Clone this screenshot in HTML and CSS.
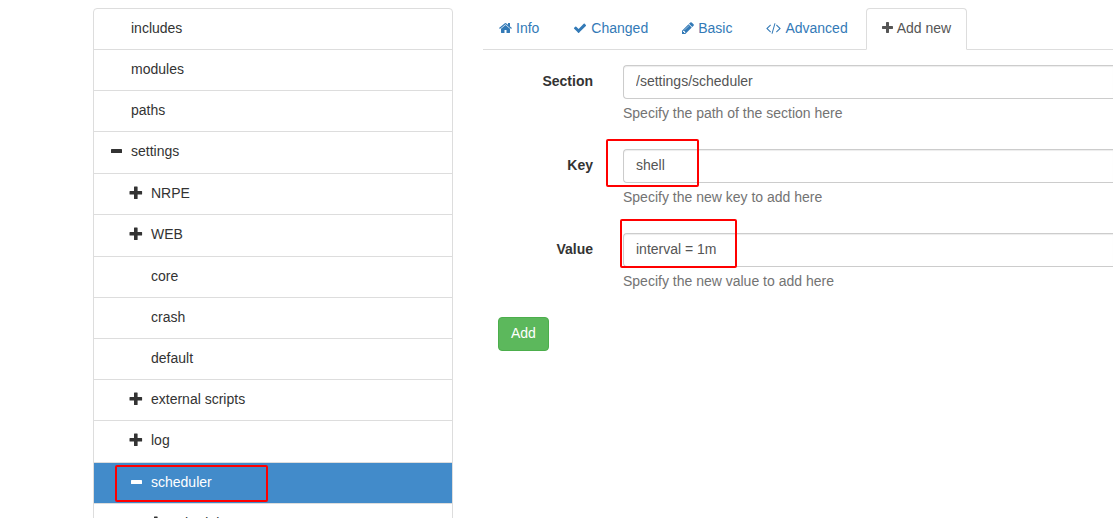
FILE: index.html
```html
<!DOCTYPE html>
<html lang="en">
  <head>
    <meta charset="UTF-8" />
    <meta name="viewport" content="width=device-width, initial-scale=1.0" />
    <title>Settings</title>
    <link rel="stylesheet" href="styles.css">
  </head>
  <body>
    <svg class="symbols" aria-hidden="true">
      <symbol id="tree-plus" viewBox="0 0 14 14">
        <path d="M5.5 0.5h2.6q.5 0 .5.5v4h4q.5 0 .5.5v2.6q0 .5-.5.5h-4v4q0 .5-.5.5h-2.6q-.5 0-.5-.5v-4h-4q-.5 0-.5-.5v-2.600q0-.5.5-.5h4v-4q0-.5.5-.5z" />
      </symbol>
      <symbol id="tree-minus" viewBox="0 0 14 14">
        <rect x="2" y="5" width="11" height="4" rx="0.6" />
      </symbol>
    </svg>

    <div class="container">
      <ul class="tree">
        <li class="node"><span class="icon"></span>includes</li>
        <li class="node"><span class="icon"></span>modules</li>
        <li class="node"><span class="icon"></span>paths</li>
        <li class="node tall"><svg class="icon"><use href="#tree-minus" /></svg>settings</li>
        <li class="node level-2"><svg class="icon"><use href="#tree-plus" /></svg>NRPE</li>
        <li class="node level-2 tall"><svg class="icon"><use href="#tree-plus" /></svg>WEB</li>
        <li class="node level-2"><span class="icon"></span>core</li>
        <li class="node level-2"><span class="icon"></span>crash</li>
        <li class="node level-2"><span class="icon"></span>default</li>
        <li class="node level-2"><svg class="icon"><use href="#tree-plus" /></svg>external scripts</li>
        <li class="node level-2 tall"><svg class="icon"><use href="#tree-plus" /></svg>log</li>
        <li class="node level-2 active">
          <svg class="icon"><use href="#tree-minus" /></svg>scheduler
          <span class="mark mark-node"></span>
        </li>
        <li class="node level-3"><svg class="icon"><use href="#tree-plus" /></svg>schedules</li>
      </ul>

      <div class="content">
        <nav class="tabs">
          <a class="tab" href="#info">
            <svg width="13" height="14" viewBox="64 0 1664 1792"><path d="M1472 992v480q0 26-19 45t-45 19h-384v-384h-256v384h-384q-26 0-45-19t-19-45v-480q0-1 .5-3t.5-3l575-474 575 474q1 2 1 6zm223-69l-62 74q-8 9-21 11h-3q-13 0-21-7l-692-577-692 577q-12 8-24 7-13-2-21-11l-62-74q-8-10-7-23.500t11-21.500l719-599q32-26 76-26t76 26l244 204v-195q0-14 9-23t23-9h192q14 0 23 9t9 23v408l219 182q10 8 11 21.500t-7 23.500z" /></svg>
            Info
          </a>
          <a class="tab" href="#changed">
            <svg width="14" height="14" viewBox="0 0 1792 1792"><path d="M1671 566q0 40-28 68l-724 724-136 136q-28 28-68 28t-68-28l-136-136-362-362q-28-28-28-68t28-68l136-136q28-28 68-28t68 28l294 295 656-657q28-28 68-28t68 28l136 136q28 28 28 68z" /></svg>
            Changed
          </a>
          <a class="tab" href="#basic">
            <svg width="12" height="14" viewBox="128 0 1536 1792"><path d="M491 1536l91-91-235-235-91 91v107h128v128h107zm523-928q0-22-22-22-10 0-17 7l-542 542q-7 7-7 17 0 22 22 22 10 0 17-7l542-542q7-7 7-17zm-54-192l416 416-832 832h-416v-416zm683 96q0 53-37 90l-166 166-416-416 166-165q36-38 90-38 53 0 91 38l235 234q37 39 37 91z" /></svg>
            Basic
          </a>
          <a class="tab" href="#advanced">
            <svg width="15" height="14" viewBox="64 0 1920 1792"><path d="M681 1399l-50 50q-10 10-23 10t-23-10l-466-466q-10-10-10-23t10-23l466-466q10-10 23-10t23 10l50 50q10 10 10 23t-10 23l-393 393 393 393q10 10 10 23t-10 23zm591-1067l-373 1291q-4 13-15.500 19.500t-23.500 2.500l-62-17q-13-4-19.500-15.500t-2.500-24.500l373-1291q4-13 15.500-19.500t23.500-2.500l62 17q13 4 19.500 15.500t2.500 24.500zm657 651l-466 466q-10 10-23 10t-23-10l-50-50q-10-10-10-23t10-23l393-393-393-393q-10-10-10-23t10-23l50-50q10-10 23-10t23 10l466 466q10 10 10 23t-10 23z" /></svg>
            Advanced
          </a>
          <a class="tab active" href="#add">
            <svg width="11" height="14" viewBox="192 0 1408 1792"><path d="M1600 736v192q0 40-28 68t-68 28h-416v416q0 40-28 68t-68 28h-192q-40 0-68-28t-28-68v-416h-416q-40 0-68-28t-28-68v-192q0-40 28-68t68-28h416v-416q0-40 28-68t68-28h192q40 0 68 28t28 68v416h416q40 0 68 28t28 68z" /></svg>
            Add new
          </a>
        </nav>

        <form class="form">
          <div class="form-group">
            <label for="section">Section</label>
            <div class="field">
              <input type="text" id="section" value="/settings/scheduler" />
              <p class="help">Specify the path of the section here</p>
            </div>
          </div>
          <div class="form-group">
            <label for="key">Key</label>
            <div class="field">
              <input type="text" id="key" value="shell" />
              <p class="help">Specify the new key to add here</p>
              <span class="mark mark-key"></span>
            </div>
          </div>
          <div class="form-group">
            <label for="value">Value</label>
            <div class="field">
              <input type="text" id="value" value="interval = 1m" />
              <p class="help">Specify the new value to add here</p>
              <span class="mark mark-value"></span>
            </div>
          </div>
          <button type="button" class="btn">Add</button>
        </form>
      </div>
    </div>
  </body>
</html>
```
FILE: styles.css
```css
* {
  box-sizing: border-box;
}
html {
  overflow: hidden;
}
body {
  margin: 0;
  font-family: "Liberation Sans", Arial, sans-serif;
  font-size: 14px;
  line-height: 20px;
  color: #333;
  background-color: #fff;
}
svg {
  fill: currentColor;
}
.symbols {
  display: none;
}
.container {
  display: grid;
  grid-template-columns: 360px 1fr;
  gap: 30px;
  padding: 8px 0 0 93px;
}

/* settings tree */
.tree {
  list-style: none;
  margin: 0;
  padding: 0;
  border: 1px solid #ddd;
  border-radius: 4px;
}
.node {
  position: relative;
  display: flex;
  align-items: center;
  gap: 8px;
  padding: 9px 15px 11px;
  border-bottom: 1px solid #ddd;
}
.node.tall {
  padding-bottom: 12px;
}
.node.level-2 {
  padding-left: 35px;
}
.node.level-3 {
  padding-left: 55px;
}
.node.active {
  color: #fff;
  background-color: #428bca;
}
.icon {
  width: 14px;
  height: 14px;
}

/* tabs */
.tabs {
  display: flex;
  gap: 2px;
  border-bottom: 1px solid #ddd;
}
.tab {
  display: flex;
  align-items: center;
  gap: 4px;
  margin-bottom: -1px;
  padding: 9px 15px 11px;
  border: 1px solid transparent;
  border-radius: 4px 4px 0 0;
  color: #337ab7;
  text-decoration: none;
}
.tab.active {
  color: #555;
  background-color: #fff;
  border-color: #ddd;
  border-bottom-color: transparent;
}

/* form */
.form {
  padding: 15px 0 0 15px;
}
.form-group {
  display: grid;
  grid-template-columns: 95px 1fr;
  gap: 30px;
  margin-bottom: 15px;
}
.form-group label {
  padding-top: 6px;
  font-weight: bold;
  text-align: right;
}
.field {
  position: relative;
}
.field input {
  display: block;
  width: 100%;
  height: 34px;
  padding: 5px 12px 7px;
  border: 1px solid #ccc;
  border-right: 0;
  border-radius: 4px 0 0 4px;
  box-shadow: inset 0 1px 1px rgba(0, 0, 0, 0.075);
  font: inherit;
  color: #555;
}
.help {
  margin: 4px 0 11px;
  color: #737373;
}
.btn {
  display: block;
  padding: 5px 12px 7px;
  border: 1px solid #4cae4c;
  border-radius: 4px;
  background-color: #5cb85c;
  color: #fff;
  font: inherit;
  cursor: pointer;
}

/* red highlight frames */
.mark {
  position: absolute;
  border: 2px solid #f00;
  border-radius: 2px;
  pointer-events: none;
}
.mark-node {
  top: 2px;
  left: 21px;
  width: 153px;
  height: 37px;
}
.mark-key {
  top: -10px;
  left: -17px;
  width: 93px;
  height: 48px;
}
.mark-value {
  top: -14px;
  left: -3px;
  width: 117px;
  height: 49px;
}
```
